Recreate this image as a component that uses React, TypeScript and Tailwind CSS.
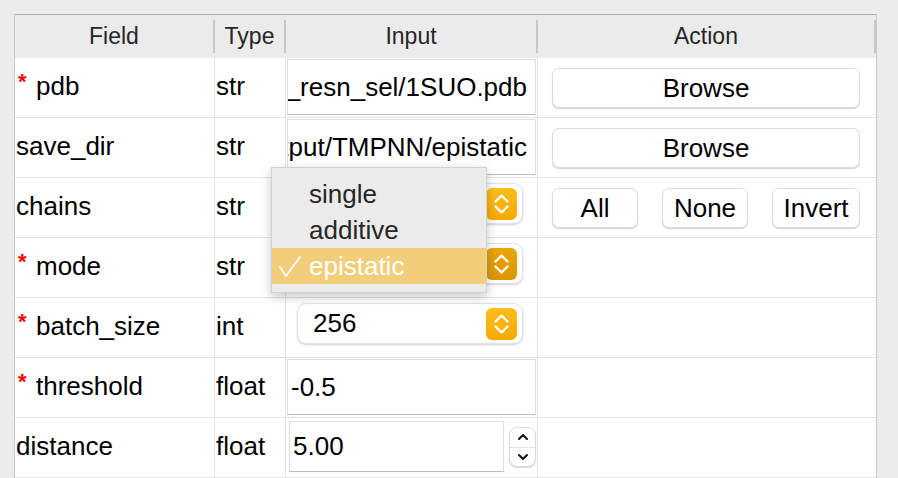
import type { ReactNode } from 'react'

const COLS = 'grid grid-cols-[200px_71px_252px_338px]'
const font = { fontFamily: '"Liberation Sans", Arial, sans-serif' }

function Stepper({ pressed }: { pressed?: boolean }) {
  return (
    <div
      className={
        'w-[31px] h-[32px] rounded-[6px] flex items-center justify-center ' +
        (pressed
          ? 'bg-gradient-to-b from-[#e8a600] to-[#db9600]'
          : 'bg-gradient-to-b from-[#fcbe1c] to-[#f5a900]')
      }
    >
      <svg width="31" height="32" viewBox="0 0 31 32" fill="none">
        <polyline points="9.5,13.5 15.5,7.5 21.5,13.5" stroke="white" strokeWidth="2.4" strokeLinecap="round" strokeLinejoin="round" />
        <polyline points="9.5,18.5 15.5,24.5 21.5,18.5" stroke="white" strokeWidth="2.4" strokeLinecap="round" strokeLinejoin="round" />
      </svg>
    </div>
  )
}

function Combo({ value, pressed }: { value: string; pressed?: boolean }) {
  return (
    <div className="ml-[11px] mt-[5px] w-[226px] h-[41px] rounded-[9px] bg-white border border-[#e2e2e2] shadow-[0_1px_2px_rgba(0,0,0,0.18)] flex items-center pl-[15px] pr-[5px]">
      <span className="flex-1 text-[26px] text-black">{value}</span>
      <Stepper pressed={pressed} />
    </div>
  )
}

function PathInput({ value }: { value: string }) {
  return (
    <div className="mx-[1px] mt-[1px] mb-[2px] flex-1 bg-white border border-[#dedede] border-b-[#bcbcbc] flex items-center justify-end overflow-hidden pr-[8px]">
      <span className="shrink-0 whitespace-nowrap text-[26px] text-black">{value}</span>
    </div>
  )
}

function TextInput({ value }: { value: string }) {
  return (
    <div className="mx-[1px] mt-[1px] mb-[2px] flex-1 bg-white border border-[#dedede] border-b-[#bcbcbc] flex items-center pl-[3px]">
      <span className="text-[26px] text-black">{value}</span>
    </div>
  )
}

function Spin() {
  return (
    <div className="flex items-start">
      <div className="ml-[3px] mt-[3px] w-[215px] h-[51px] bg-white border border-[#dedede] border-b-[#bcbcbc] flex items-center pl-[3px]">
        <span className="text-[26px] text-black">5.00</span>
      </div>
      <div className="ml-[5px] mt-[9px] w-[27px] h-[40px] rounded-[8px] bg-white border border-[#dadada] shadow-[0_1px_1px_rgba(0,0,0,0.15)] flex flex-col">
        <div className="flex-1 flex items-center justify-center border-b border-[#e2e2e2]">
          <svg width="12" height="8" viewBox="0 0 12 8" fill="none">
            <polyline points="2,6 6,2 10,6" stroke="#111" strokeWidth="2" strokeLinecap="round" strokeLinejoin="round" />
          </svg>
        </div>
        <div className="flex-1 flex items-center justify-center">
          <svg width="12" height="8" viewBox="0 0 12 8" fill="none">
            <polyline points="2,2 6,6 10,2" stroke="#111" strokeWidth="2" strokeLinecap="round" strokeLinejoin="round" />
          </svg>
        </div>
      </div>
    </div>
  )
}

function Btn({ label, className }: { label: string; className: string }) {
  return (
    <button className={'h-[40px] rounded-[7px] bg-white border border-[#dcdcdc] shadow-[0_1px_1px_rgba(0,0,0,0.18)] text-[26px] text-black ' + className}>
      {label}
    </button>
  )
}

function Row({ name, type, required, input, action }: { name: string; type: string; required?: boolean; input: ReactNode; action?: ReactNode }) {
  return (
    <div className={COLS + ' h-[60px] border-b border-[#e3e3e3]'}>
      <div className="flex items-center pl-[1px] pb-[2px] border-r border-[#e3e3e3] text-[26px] text-black">
        {required && <span className="w-[20px] pl-[2px] text-[22px] text-[#ff0000] font-bold self-start pt-[13px] leading-none">*</span>}
        <span>{name}</span>
      </div>
      <div className="flex items-center pl-[1px] pb-[2px] border-r border-[#e3e3e3] text-[26px] text-black">{type}</div>
      <div className="flex border-r border-[#e3e3e3]">{input}</div>
      <div className="flex items-center pl-[14px]">{action}</div>
    </div>
  )
}

function HeadCell({ label }: { label: string }) {
  return (
    <div className="flex items-center">
      <span className="flex-1 text-center text-[23px] text-[#262626]">{label}</span>
      <div className="w-[2px] h-[33px] bg-[#c6c6c6]" />
    </div>
  )
}

export default function App() {
  return (
    <div className="relative w-[898px] h-[478px] bg-[#ececec] overflow-hidden" style={font}>
      <div className="ml-[14px] mt-[14px] w-[863px] border-t border-t-[#adadad] border-x border-x-[#c9c9c9] bg-white">
        <div className={COLS + ' h-[43px] bg-[#ebebeb]'}>
          <HeadCell label="Field" />
          <HeadCell label="Type" />
          <HeadCell label="Input" />
          <HeadCell label="Action" />
        </div>
        <Row
          name="pdb"
          type="str"
          required
          input={<PathInput value="/Users/demo/data/residue_resn_sel/1SUO.pdb" />}
          action={<Btn label="Browse" className="w-[308px]" />}
        />
        <Row
          name="save_dir"
          type="str"
          input={<PathInput value="/Users/demo/output/TMPNN/epistatic" />}
          action={<Btn label="Browse" className="w-[308px]" />}
        />
        <Row
          name="chains"
          type="str"
          input={<Combo value="A" />}
          action={
            <div className="flex gap-[24px]">
              <Btn label="All" className="w-[86px]" />
              <Btn label="None" className="w-[86px]" />
              <Btn label="Invert" className="w-[88px]" />
            </div>
          }
        />
        <Row name="mode" type="str" required input={<Combo value="epistatic" pressed />} />
        <Row name="batch_size" type="int" required input={<Combo value="256" />} />
        <Row name="threshold" type="float" required input={<TextInput value="-0.5" />} />
        <Row name="distance" type="float" input={<Spin />} />
      </div>

      {/* open popup of the mode combo */}
      <div className="absolute left-[271px] top-[167px] w-[216px] h-[126px] bg-[#ebebeb] border border-[#d2d2d2] shadow-[0_4px_10px_rgba(0,0,0,0.22)] pt-[8px] text-[26px]">
        <div className="h-[36px] flex items-center pl-[37px] text-[#262626]">single</div>
        <div className="h-[36px] flex items-center pl-[37px] text-[#262626]">additive</div>
        <div className="h-[36px] flex items-center bg-[#f2ce7a] text-white">
          <svg width="37" height="36" viewBox="0 0 37 36" fill="none">
            <polyline points="8,19 14,28 28,9" stroke="white" strokeWidth="1.8" strokeLinecap="round" strokeLinejoin="round" />
          </svg>
          <span>epistatic</span>
        </div>
      </div>
    </div>
  )
}
